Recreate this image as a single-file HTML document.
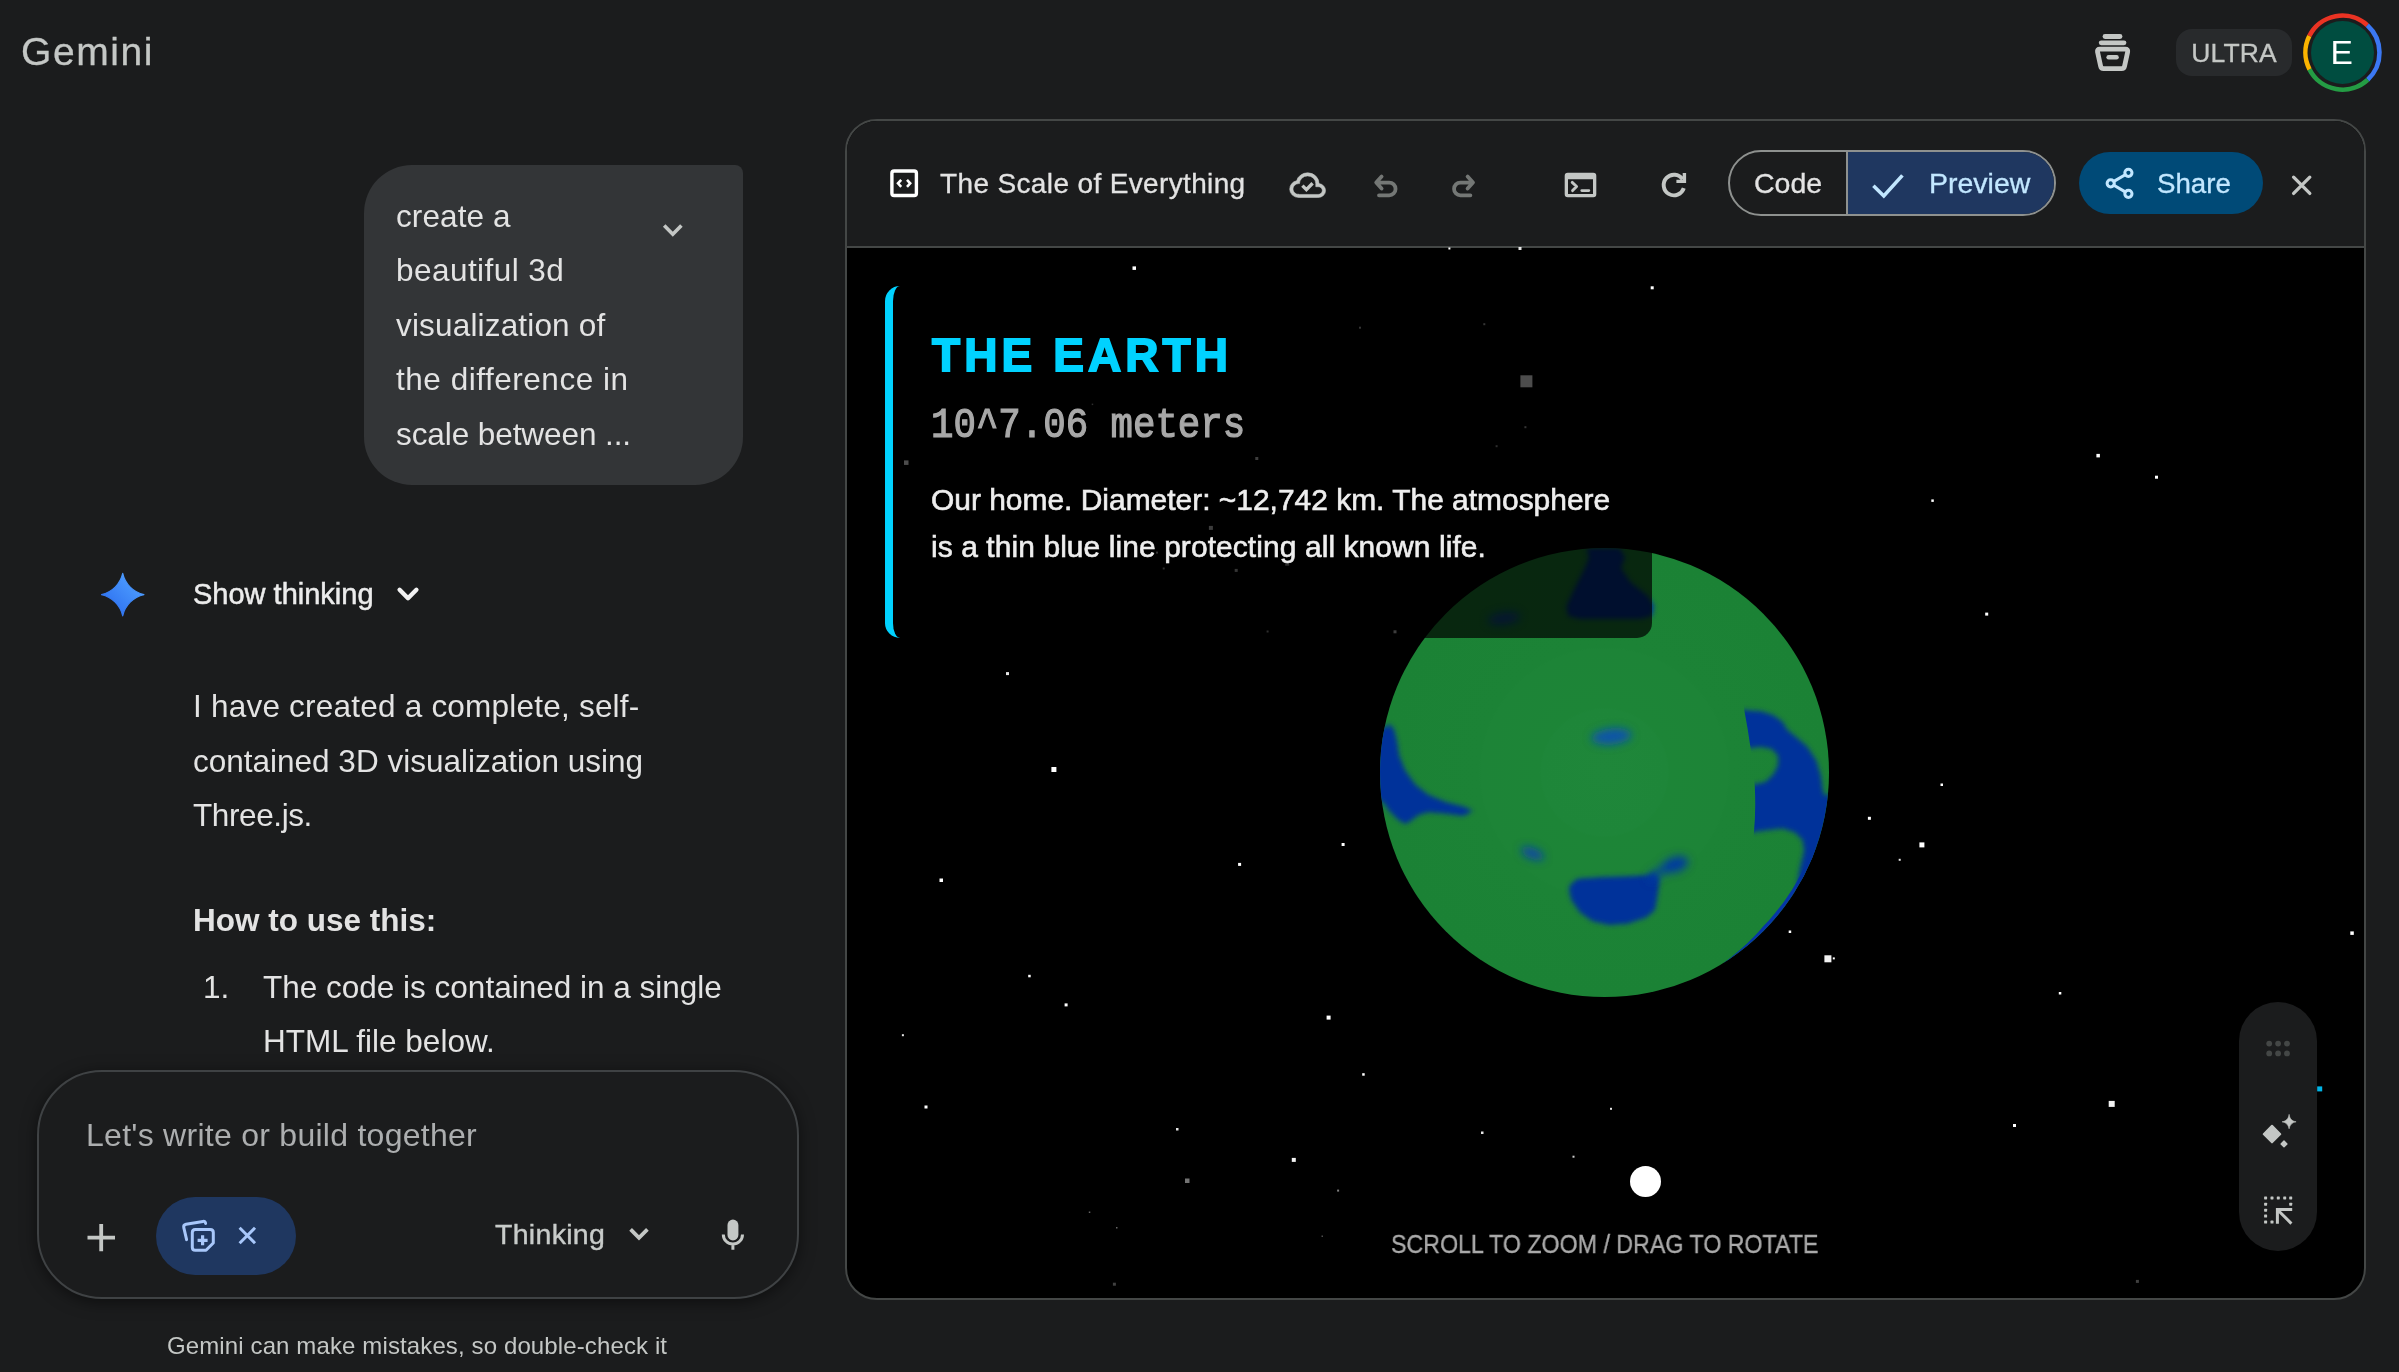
<!DOCTYPE html>
<html>
<head>
<meta charset="utf-8">
<title>Gemini</title>
<style>
*{box-sizing:border-box;margin:0;padding:0}
html,body{width:2399px;height:1372px;overflow:hidden;background:#1b1c1d}
body{font-family:"Liberation Sans",sans-serif;color:#e3e3e3;position:relative}
.abs{position:absolute;white-space:nowrap;will-change:transform}
svg{position:absolute;overflow:visible}
/* ---------- top bar ---------- */
#logo{left:20.6px;top:29.2px;font-size:39px;line-height:46px;color:#c4c7c5;letter-spacing:1.6px;-webkit-text-stroke:0.3px #c4c7c5}
#ultra{left:2176px;top:29px;width:116px;height:47px;border-radius:16px;background:#282a2c;color:#c4c7c5;font-size:26.5px;line-height:48px;text-align:center;letter-spacing:0.1px;-webkit-text-stroke:0.3px #c4c7c5}
#avatar{left:2311px;top:21px;width:63px;height:63px;border-radius:50%;background:#004d40;color:#fff;font-size:33.5px;line-height:64px;text-align:center;text-indent:-1.5px}
/* ---------- left chat ---------- */
#bubble{left:364px;top:165px;width:379px;height:320px;background:#333537;border-radius:48px 8px 48px 48px}
.btxt{left:396px;font-size:31.5px;line-height:54px;color:#e3e3e3}
.body{font-size:31.5px;line-height:54px;color:#e3e3e3}
#think{left:193px;top:577px;font-size:29px;line-height:34px;color:#ececec;-webkit-text-stroke:0.5px #ececec}
/* ---------- input ---------- */
#input{left:36.6px;top:1070px;width:761.6px;height:229.4px;border-radius:65px;border:2px solid #3f4244;background:#1b1c1d;box-shadow:0 3px 16px rgba(0,0,0,0.5)}
#ph{left:86px;top:1112px;font-size:32px;line-height:46px;color:#acaeaf;letter-spacing:0.27px}
#chip{left:156px;top:1197px;width:140px;height:78px;border-radius:39px;background:#1f3760}
#mode{left:495px;top:1213.6px;font-size:28.5px;line-height:40px;color:#c8cbc9;-webkit-text-stroke:0.4px #c8cbc9;letter-spacing:0.3px}
#foot{left:167px;top:1330px;font-size:24px;line-height:32px;color:#c4c7c5;letter-spacing:0.12px}
/* ---------- canvas panel ---------- */
#panel{left:845px;top:119px;width:1521px;height:1181px;border:2px solid #444746;border-radius:32px;background:#000;overflow:hidden}
#phead{left:0;top:0;width:1517px;height:127px;background:#1b1c1d;border-bottom:2px solid #444746}
#ptitle{left:940px;top:164.7px;font-size:28px;line-height:38px;color:#e3e3e3;-webkit-text-stroke:0.3px #e3e3e3;letter-spacing:0.36px}
#seg{left:1728px;top:150px;width:328px;height:66px;border:2px solid #8e918f;border-radius:33px;overflow:hidden;background:#1b1c1d}
#segR{left:116px;top:0;width:209px;height:62px;background:#1f3760;border-left:2px solid #8e918f}
#code{left:1754px;top:164px;font-size:28.5px;line-height:38px;color:#e3e3e3;-webkit-text-stroke:0.3px #e3e3e3}
#prev{left:1929px;top:164px;font-size:28.5px;line-height:38px;color:#c2e7ff;-webkit-text-stroke:0.3px #c2e7ff}
#share{left:2079px;top:152px;width:184px;height:62px;border-radius:31px;background:#004a77}
#sharet{left:2156.8px;top:164.8px;font-size:27.7px;line-height:38px;color:#c2e7ff;-webkit-text-stroke:0.3px #c2e7ff}
/* ---------- preview content ---------- */
#earth{left:1380px;top:548px;width:449px;height:449px;border-radius:50%;background:#1e8337;overflow:hidden}
#info{left:885px;top:286px;width:767px;height:352px;background:rgba(0,0,0,0.7);border-left:8px solid #00d2ff;border-radius:15px}
#h1{left:931.5px;top:326.5px;font-size:46px;line-height:56px;font-weight:bold;color:#00d2ff;letter-spacing:4.1px;-webkit-text-stroke:1.8px #00d2ff}
#h2{left:931px;top:401px;font-family:"Liberation Mono",monospace;font-size:37.4px;line-height:46px;color:#a8a8a8;-webkit-text-stroke:1.1px #a8a8a8;transform-origin:0 8.3px;transform:scaleY(1.13)}
.desc{left:931px;font-size:29.95px;line-height:46px;color:#eeeeee;-webkit-text-stroke:0.6px #eee}
#hint{left:1391px;top:1227px;font-size:26px;line-height:34px;color:#aaaaaa;transform-origin:0 50%;transform:scaleX(0.893);-webkit-text-stroke:0.35px #aaa}
#dot{left:1630px;top:1166px;width:31px;height:31px;border-radius:50%;background:#fff}
#tools{left:2239px;top:1002px;width:78px;height:249px;border-radius:39px;background:#1b1c1d}
.s{position:absolute;background:#fff}
</style>
</head>
<body>
<!-- TOP BAR -->
<div class="abs" id="logo">Gemini</div>
<div class="abs" id="ultra">ULTRA</div>
<div class="abs" id="avatar">E</div>

<!-- LEFT CHAT -->
<div class="abs" id="bubble"></div>
<div class="abs btxt" style="top:188.5px;letter-spacing:.1px">create a</div>
<div class="abs btxt" style="top:243px;letter-spacing:.45px">beautiful 3d</div>
<div class="abs btxt" style="top:297.5px;letter-spacing:.17px">visualization of</div>
<div class="abs btxt" style="top:352px;letter-spacing:.53px">the difference in</div>
<div class="abs btxt" style="top:406.5px;letter-spacing:-.08px">scale between ...</div>

<div class="abs" id="think">Show thinking</div>
<div class="abs body" style="left:193px;top:679px;letter-spacing:.22px">I have created a complete, self-</div>
<div class="abs body" style="left:193px;top:734px">contained 3D visualization using</div>
<div class="abs body" style="left:193px;top:788px;letter-spacing:-.4px">Three.js.</div>
<div class="abs body" style="left:193px;top:893px;font-weight:bold">How to use this:</div>
<div class="abs body" style="left:203px;top:960px">1.</div>
<div class="abs body" style="left:263px;top:960px">The code is contained in a single</div>
<div class="abs body" style="left:263px;top:1014px">HTML file below.</div>

<!-- INPUT -->
<div class="abs" id="input"></div>
<div class="abs" id="ph">Let's write or build together</div>
<div class="abs" id="chip"></div>
<div class="abs" id="mode">Thinking</div>
<div class="abs" id="foot">Gemini can make mistakes, so double-check it</div>

<!-- CANVAS PANEL -->
<div class="abs" id="panel">
  <div class="abs" id="phead"></div>
</div>
<div class="abs" id="ptitle">The Scale of Everything</div>
<div class="abs" id="seg"><div class="abs" id="segR"></div></div>
<div class="abs" id="code">Code</div>
<div class="abs" id="prev">Preview</div>
<div class="abs" id="share"></div>
<div class="abs" id="sharet">Share</div>

<!-- PREVIEW CONTENT -->

<svg id="earthsvg" style="left:0;top:0" width="2399" height="1372" viewBox="0 0 2399 1372">
<defs>
<clipPath id="ec"><circle cx="1604.5" cy="772.5" r="224.5"/></clipPath>
<radialGradient id="eg" cx="50%" cy="50%" r="50%"><stop offset="0" stop-color="#1f873a"/><stop offset="0.28" stop-color="#1e8639"/><stop offset="0.29" stop-color="#1d8537"/><stop offset="0.55" stop-color="#1d8437"/><stop offset="0.56" stop-color="#1c8336"/><stop offset="1" stop-color="#1b8235"/></radialGradient>
<filter id="b3" x="-20%" y="-20%" width="140%" height="140%"><feGaussianBlur stdDeviation="2.6"/></filter>
<filter id="b5" x="-30%" y="-30%" width="160%" height="160%"><feGaussianBlur stdDeviation="4"/></filter>
<clipPath id="seam"><path d="M1743.4 700L1744.4 710.7Q1751.6 748 1754.8 786.4Q1756 812 1753.9 832.4L1753 842L1765 1000H1900V700Z"/></clipPath>
</defs>
<g fill="#fff"><rect x="1132.5" y="266.4" width="3.5" height="3.5" opacity="1"/><rect x="1448.4" y="247.5" width="2" height="2" opacity="1"/><rect x="1518.5" y="247.0" width="3" height="3" opacity="0.9"/><rect x="1520.4" y="375.3" width="12" height="12" opacity="1"/><rect x="904.0" y="460.4" width="4.5" height="4.5" opacity="1"/><rect x="1359.0" y="326.7" width="2" height="2" opacity="0.7"/><rect x="1483.3" y="323.2" width="2" height="2" opacity="0.7"/><rect x="1091.7" y="403.6" width="1.5" height="1.5" opacity="0.6"/><rect x="1524.4" y="426.2" width="2" height="2" opacity="0.7"/><rect x="1495.6" y="445.2" width="2" height="2" opacity="0.6"/><rect x="1255.3" y="457.0" width="3" height="3" opacity="0.8"/><rect x="1208.9" y="525.9" width="4" height="4" opacity="0.8"/><rect x="1156.0" y="551.6" width="2" height="2" opacity="0.7"/><rect x="1162.7" y="567.5" width="2" height="2" opacity="0.6"/><rect x="1234.7" y="568.9" width="3" height="3" opacity="0.7"/><rect x="1285.2" y="561.7" width="4" height="4" opacity="0.6"/><rect x="1266.6" y="630.5" width="2" height="2" opacity="0.6"/><rect x="1393.5" y="630.3" width="3" height="3" opacity="0.8"/><rect x="1006.0" y="672.1" width="3" height="3" opacity="0.9"/><rect x="1650.7" y="286.3" width="3" height="3" opacity="1"/><rect x="2096.4" y="453.9" width="3.5" height="3.5" opacity="1"/><rect x="2155.0" y="475.7" width="3" height="3" opacity="1"/><rect x="1931.3" y="499.4" width="2.5" height="2.5" opacity="1"/><rect x="1985.2" y="612.6" width="3" height="3" opacity="1"/><rect x="1051.4" y="767.0" width="5" height="5" opacity="1"/><rect x="939.5" y="878.5" width="3.5" height="3.5" opacity="1"/><rect x="1238.1" y="862.9" width="3" height="3" opacity="1"/><rect x="1341.6" y="843.0" width="3" height="3" opacity="1"/><rect x="1028.2" y="974.8" width="2.5" height="2.5" opacity="1"/><rect x="1064.6" y="1003.4" width="3" height="3" opacity="1"/><rect x="901.9" y="1034.2" width="2" height="2" opacity="0.9"/><rect x="1326.6" y="1015.6" width="4" height="4" opacity="1"/><rect x="1362.2" y="1073.2" width="2.5" height="2.5" opacity="1"/><rect x="924.5" y="1105.5" width="3" height="3" opacity="1"/><rect x="1176.0" y="1128.0" width="2.5" height="2.5" opacity="0.9"/><rect x="1291.8" y="1157.9" width="4" height="4" opacity="0.95"/><rect x="1185.0" y="1178.5" width="4.5" height="4.5" opacity="0.45"/><rect x="1481.0" y="1131.5" width="2.5" height="2.5" opacity="0.9"/><rect x="1572.5" y="1155.7" width="2" height="2" opacity="0.8"/><rect x="1337.1" y="1189.6" width="2" height="2" opacity="0.5"/><rect x="1088.8" y="1211.5" width="1.5" height="1.5" opacity="0.4"/><rect x="1116.0" y="1227.0" width="1.5" height="1.5" opacity="0.4"/><rect x="1321.5" y="1235.5" width="1.5" height="1.5" opacity="0.3"/><rect x="1112.9" y="1282.7" width="3" height="3" opacity="0.25"/><rect x="1940.5" y="783.5" width="2.5" height="2.5" opacity="1"/><rect x="1867.9" y="816.8" width="3" height="3" opacity="1"/><rect x="1919.4" y="842.4" width="5" height="5" opacity="1"/><rect x="1898.7" y="858.8" width="2" height="2" opacity="0.9"/><rect x="1788.7" y="930.5" width="2.5" height="2.5" opacity="1"/><rect x="1824.4" y="955.3" width="7" height="7" opacity="0.95"/><rect x="1832.8" y="957.4" width="2" height="2" opacity="1"/><rect x="2350.3" y="931.4" width="3.5" height="3.5" opacity="1"/><rect x="2058.8" y="992.0" width="2.5" height="2.5" opacity="1"/><rect x="2108.7" y="1100.9" width="6" height="6" opacity="0.95"/><rect x="2013.0" y="1124.0" width="3" height="3" opacity="1"/><rect x="1610.0" y="1107.8" width="2" height="2" opacity="0.9"/><rect x="2135.9" y="1279.9" width="3" height="3" opacity="0.25"/></g>
<circle cx="1604.5" cy="772.5" r="224.5" fill="url(#eg)"/>
<g clip-path="url(#ec)">
  <polygon fill="#0636a6" points="1817.3,850.0 1814.5,857.3 1811.4,864.6 1808.1,871.8 1804.5,878.8 1800.7,885.8 1796.6,892.5 1792.3,899.2 1787.7,905.6 1783.0,911.9 1778.0,918.1 1772.8,924.1 1767.4,929.8 1761.8,935.4 1756.1,940.8 1750.1,946.0 1743.9,951.0 1737.6,955.7 1731.2,960.3 1724.5,964.6 1723.5,962.9 1729.8,958.2 1735.9,953.3 1741.8,948.3 1747.6,943.0 1753.1,937.5 1758.4,931.9 1763.5,926.1 1768.8,920.4 1773.9,914.6 1778.7,908.6 1783.4,902.5 1787.8,896.1 1792.0,889.7 1796.0,883.0 1799.7,876.3 1803.2,869.4 1806.5,862.4 1809.5,855.3 1812.3,848.1"/>
  <g filter="url(#b3)" fill="#03309a">
    <polygon points="1586.5,548 1619.8,548 1625,557.6 1621,568 1630.3,582.1 1647.8,596.1 1654,606 1652,616 1640,619 1580,619 1568,616 1566.5,606 1574.3,589.1 1584.8,568.1 1589,557.6"/>
    <polygon points="1389.7,724.0 1394.0,729.2 1397.0,740.8 1399.2,755.4 1405.0,770.0 1415.2,784.5 1428.3,794.8 1445.8,802.0 1463.3,806.4 1473.0,810.8 1463.3,815.9 1445.8,813.7 1428.3,812.2 1418.1,815.2 1410.8,821.0 1405.0,824.0 1397.7,819.5 1389.0,810.8 1383.1,802.0 1372.0,800.0 1372.0,727.0 1386.0,727.0"/>
    <polygon points="1570,885 1577.5,878.8 1602.5,876.9 1627.5,876.3 1647.5,875 1655,872.5 1659.5,879 1658.8,887.5 1656.9,900 1655,910 1646.3,917.5 1627.5,923.8 1608.8,925 1592.5,921.3 1580,912.5 1571.3,900 1569,890"/>
    
  </g>
  <g clip-path="url(#seam)"><g filter="url(#b3)" fill="#03309a"><polygon points="1734.0,709.5 1761.2,711.2 1773.5,715.3 1782.7,722.1 1787.2,729.8 1794.9,735.9 1807.1,746.6 1816.3,760.4 1820.9,775.7 1822.5,788.0 1824.0,795.6 1832.0,794.0 1840.0,800.0 1830.0,850.0 1806.0,892.0 1797.0,886.0 1799.5,870.6 1804.1,850.7 1802.6,840.0 1794.9,832.4 1782.7,828.5 1768.9,830.1 1742.0,833.6 1742.0,787.5 1765.8,781.8 1773.5,774.2 1778.1,765.0 1778.1,755.8 1771.9,748.9 1761.2,746.9 1738.0,749.0"/></g></g>
  <g filter="url(#b5)">
    <ellipse cx="1611.5" cy="736.5" rx="20" ry="8" fill="#0f55a8" transform="rotate(-6 1611.5 736.5)"/>
    <ellipse cx="1532.5" cy="853.5" rx="12" ry="5.5" fill="#0b4aa2" transform="rotate(22 1532.5 853.5)"/>
    <ellipse cx="1504" cy="618.5" rx="16" ry="6" fill="#0b4aa2" transform="rotate(-8 1504 618.5)"/>
    <ellipse cx="1675" cy="864.6" rx="13.5" ry="7.5" fill="#033aa0" transform="rotate(-18 1675 864.6)"/>
    <path d="M1652 877L1666 868" stroke="#0640a0" stroke-width="9" stroke-linecap="round" fill="none" opacity=".8"/>
  </g>
</g>
</svg>

<div class="abs" id="info"></div>
<div class="abs" id="h1">THE EARTH</div>
<div class="abs" id="h2">10^7.06 meters</div>
<div class="abs desc" style="top:477px">Our home. Diameter: ~12,742 km. The atmosphere</div>
<div class="abs desc" style="top:524px;letter-spacing:.09px">is a thin blue line protecting all known life.</div>
<div class="abs" id="dot"></div>
<div class="abs" id="hint">SCROLL TO ZOOM / DRAG TO ROTATE</div>
<div class="abs" id="tools"></div>

<svg id="icons" style="left:0;top:0;pointer-events:none" width="2399" height="1372" viewBox="0 0 2399 1372" fill="none" stroke-linecap="round" stroke-linejoin="round">
<defs>
<linearGradient id="sg" x1="0" y1="1" x2="1" y2="0"><stop offset="0.2" stop-color="#3073f0"/><stop offset="0.8" stop-color="#4c9cff"/></linearGradient>
</defs>
<!-- archive stack icon -->
<g stroke="#c4c7c5" stroke-width="4.8">
  <path d="M2105 36.5H2120"/>
  <path d="M2101.2 42.8H2124"/>
  <path d="M2099.8 49.2H2125.4Q2128.1 49.2 2127.7 51.8L2124.6 66Q2124.1 68.6 2121.6 68.6H2103.6Q2101.1 68.6 2100.6 66L2097.5 51.8Q2097.1 49.2 2099.8 49.2Z"/>
  <path d="M2108.6 57.2H2116.6" stroke-width="4.4"/>
</g>
<!-- avatar ring -->
<g stroke-width="4.6" stroke-linecap="butt">
  <path id="r1" stroke="#ea3323" d="M2309.3 36.1A37 37 0 0 1 2367.3 25.2"/>
  <path stroke="#3b78f3" d="M2367.3 25.2A37 37 0 0 1 2367.7 79.7"/>
  <path stroke="#249c44" d="M2367.7 79.7A37 37 0 0 1 2309.5 69.4"/>
  <path stroke="#fbb400" d="M2309.5 69.4A37 37 0 0 1 2309.3 36.1"/>
</g>
<!-- bubble chevron -->
<path stroke="#c4c7c5" stroke-width="3.6" stroke-linecap="butt" stroke-linejoin="miter" d="M664.2 225.6L672.8 234.2L681.4 225.6"/>
<!-- gemini star -->
<path fill="url(#sg)" stroke="url(#sg)" stroke-width="1.2" d="M122.7 573.4C125.10000000000001 584.0 133.3 592.2 143.9 594.6C133.3 597.0 125.10000000000001 605.2 122.7 615.8000000000001C120.3 605.2 112.10000000000001 597.0 101.5 594.6C112.10000000000001 592.2 120.3 584.0 122.7 573.4Z"/>
<!-- show thinking chevron -->
<path stroke="#f2f2f2" stroke-width="4.4" stroke-linecap="round" stroke-linejoin="round" d="M399.6 589.8L408 598.2L416.4 589.8"/>
<!-- plus -->
<path stroke="#c4c7c5" stroke-width="3.8" stroke-linecap="butt" d="M87.5 1237.6H115M101.2 1223.9V1251.3"/>
<!-- chip icon -->
<g stroke="#a8c7fa" stroke-width="3">
  <path d="M186.6 1239.6L183.8 1227.6Q183.2 1224.8 186 1224.2L203 1221.4Q205.4 1221 205.6 1223.4"/>
  <path d="M195.3 1229.6H210.3Q213.3 1229.6 213.3 1232.6V1243L206 1250.2H195.3Q192.3 1250.2 192.3 1247.2V1232.6Q192.3 1229.6 195.3 1229.6Z"/>
  <path d="M197.6 1240.3H207.6M202.6 1235.3V1245.3" stroke-width="3.2" stroke-linecap="butt"/>
  <path d="M239.6 1227.8L255 1243.2M255 1227.8L239.6 1243.2" stroke-linecap="butt"/>
</g>
<!-- mode chevron -->
<path stroke="#c4c7c5" stroke-width="3.8" stroke-linecap="butt" stroke-linejoin="miter" d="M630.6 1229.4L639 1237.8L647.4 1229.4"/>
<!-- mic -->
<rect x="727.5" y="1219.6" width="10.9" height="20.8" rx="5.45" fill="#c4c7c5"/>
<path stroke="#c4c7c5" stroke-width="3" stroke-linecap="butt" d="M723.3 1234.5A9.6 9.6 0 0 0 742.5 1234.5M732.9 1244V1249.8"/>
<!-- code icon -->
<rect x="891.9" y="171" width="24.5" height="24.5" rx="2.2" stroke="#fff" stroke-width="3.4"/>
<path stroke="#fff" stroke-width="2.6" stroke-linecap="butt" stroke-linejoin="miter" d="M901.2 179.8L898 183.3L901.2 186.8M907 179.8L910.2 183.3L907 186.8"/>
<!-- cloud done -->
<g transform="translate(1288.07 166.62) scale(1.63 1.545)"><path fill="#c4c7c5" stroke="#c4c7c5" stroke-width="0.36" fill-rule="evenodd" d="M6.5 20q-2.28 0-3.89-1.57Q1 16.85 1 14.58q0-1.95 1.17-3.48 1.18-1.52 3.08-1.95.63-2.3 2.5-3.72Q9.63 4 12 4q2.93 0 4.96 2.04Q19 8.07 19 11q1.73.2 2.86 1.5 1.14 1.28 1.14 3 0 1.88-1.31 3.19T18.5 20Zm0-2h12q1.05 0 1.77-.73.73-.72.73-1.77t-.73-1.77Q19.55 13 18.5 13H17v-2q0-2.07-1.46-3.54Q14.08 6 12 6 9.93 6 8.46 7.46 7 8.93 7 11h-.5q-1.45 0-2.47 1.02Q3 13.05 3 14.5q0 1.45 1.03 2.47Q5.05 18 6.5 18Z"/></g>
<path stroke="#c4c7c5" stroke-width="3.4" stroke-linecap="butt" stroke-linejoin="miter" d="M1302.4 185.6L1306.4 189.6L1312.6 183.2"/>
<!-- undo / redo -->
<g stroke="#747775" stroke-width="3.8">
  <path d="M1381.6 176.6L1376.2 182.6L1381.6 188.6M1376.6 182.6H1389.2A6.35 6.35 0 0 1 1389.2 195.3H1379"/>
  <path d="M1467.6 176.6L1473 182.6L1467.6 188.6M1472.6 182.6H1460.4A6.35 6.35 0 0 0 1460.4 195.3H1470.4"/>
</g>
<!-- terminal -->
<path fill="#c4c7c5" fill-rule="evenodd" d="M1567.7 172.8H1593.3Q1596.3 172.8 1596.3 175.8V194.3Q1596.3 197.3 1593.3 197.3H1567.7Q1564.7 197.3 1564.7 194.3V175.8Q1564.7 172.8 1567.7 172.8ZM1568 179.2V193.9H1593V179.2Z"/>
<path stroke="#c4c7c5" stroke-width="2.9" d="M1572.2 182.4L1576.6 186.5L1572.6 190.6M1581.8 190.6H1588.8"/>
<!-- refresh -->
<path stroke="#c4c7c5" stroke-width="3.9" stroke-linecap="butt" d="M1683.8 188.2A10.3 10.3 0 1 1 1682.6 179.4"/>
<path stroke="#c4c7c5" stroke-width="3.4" stroke-linecap="butt" stroke-linejoin="miter" d="M1684.4 173V181.4H1676.4"/>
<!-- preview check -->
<path stroke="#c2e7ff" stroke-width="3.6" stroke-linecap="butt" stroke-linejoin="miter" d="M1873.4 185.8L1883.8 196L1902.4 175.4"/>
<!-- share -->
<g stroke="#c2e7ff" stroke-width="3">
  <circle cx="2128.4" cy="172.8" r="3.6"/><circle cx="2110.7" cy="183.3" r="3.6"/><circle cx="2128.4" cy="193.8" r="3.6"/>
  <path d="M2113.9 181.4L2125.2 174.7M2113.9 185.2L2125.2 191.9"/>
</g>
<!-- close X -->
<path stroke="#c4c7c5" stroke-width="3.3" d="M2293.6 177.2L2309.8 193.4M2309.8 177.2L2293.6 193.4"/>
<!-- toolbar: drag dots -->
<g fill="#444746" stroke="none">
  <circle cx="2269.2" cy="1043.6" r="2.9"/><circle cx="2278.1" cy="1043.6" r="2.9"/><circle cx="2287" cy="1043.6" r="2.9"/>
  <circle cx="2269.2" cy="1053.4" r="2.9"/><circle cx="2278.1" cy="1053.4" r="2.9"/><circle cx="2287" cy="1053.4" r="2.9"/>
</g>
<!-- toolbar: sparkle -->
<g fill="#c4c7c5" stroke="#c4c7c5" stroke-width="2" >
  <path d="M2272 1125.8L2280.3 1134.1L2272 1142.4L2263.7 1134.1Z"/>
  <path d="M2284 1141L2286.9 1143.9L2284 1146.8L2281.1 1143.9Z" stroke-width="1.4"/>
  <path stroke-width="0.6" d="M2289.1 1114.8C2289.9 1119 2291.9 1121 2296.1 1121.8C2291.9 1122.6 2289.9 1124.6 2289.1 1128.8C2288.3 1124.6 2286.3 1122.6 2282.1 1121.8C2286.3 1121 2288.3 1119 2289.1 1114.8Z"/>
</g>
<!-- toolbar: select -->
<g fill="#c4c7c5" stroke="none">
  <rect x="2264.1" y="1196.4" width="3" height="3" rx=".6"/><rect x="2270.5" y="1196.4" width="3" height="3" rx=".6"/><rect x="2276.8" y="1196.4" width="3" height="3" rx=".6"/><rect x="2283.2" y="1196.4" width="3" height="3" rx=".6"/><rect x="2289.2" y="1196.4" width="3" height="3" rx=".6"/>
  <rect x="2264.1" y="1202.7" width="3" height="3" rx=".6"/><rect x="2264.1" y="1208.7" width="3" height="3" rx=".6"/><rect x="2264.1" y="1214.5" width="3" height="3" rx=".6"/><rect x="2264.1" y="1220.6" width="3" height="3" rx=".6"/>
  <rect x="2289.2" y="1202.7" width="3" height="3" rx=".6"/>
  <rect x="2270.5" y="1220.6" width="3" height="3" rx=".6"/>
</g>
<path stroke="#c4c7c5" stroke-width="3" stroke-linecap="butt" stroke-linejoin="miter" d="M2292.2 1209.6H2277.4V1223.8M2278 1210.2L2291.4 1223.6"/>
<!-- cyan pixel -->
<rect x="2317.2" y="1086.4" width="5" height="5" fill="#00b4e6"/>
</svg>
</body>
</html>
